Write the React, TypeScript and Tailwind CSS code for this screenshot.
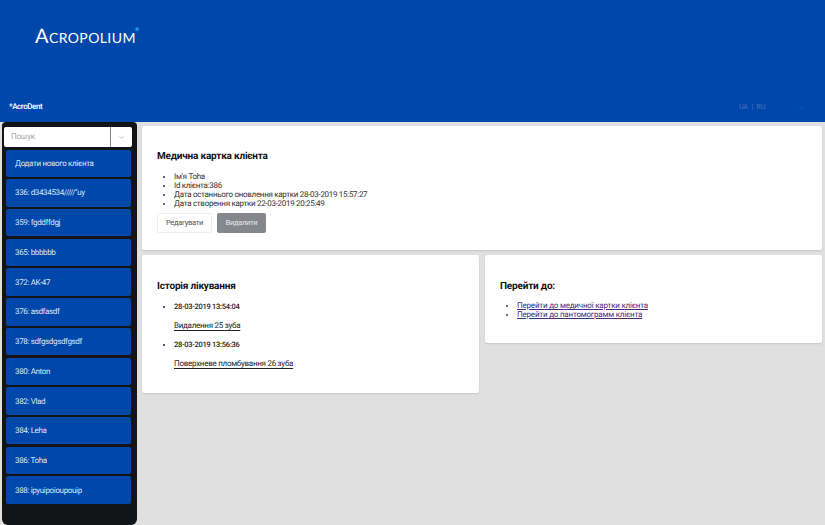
import React from "react";
import { ChevronDown } from "lucide-react";

const items = ["336: d3434534/////\"uy","359: fgddffdgj","365: bbbbbb","372: AK-47","376: asdfasdf","378: sdfgsdgsdfgsdf","380: Anton","382: Vlad","384: Leha","386: Toha","388: ipyuipoioupouip"];

export default function App() {
  return (
    <div className="font-['Roboto','Noto_Sans',sans-serif] antialiased [text-rendering:geometricPrecision] w-[825px] h-[525px] overflow-hidden bg-[#e0e0e0] flex flex-col">
      <header className="h-[122px] shrink-0 bg-[#0047ab] flex flex-col">
        <div className="h-[99px] pl-[35px] pt-[23px]">
          <div className="flex items-start text-white">
            <span className="font-['Lato',sans-serif] font-normal text-[20px] leading-[26px] tracking-[0.4px] [font-variant:small-caps]">Acropolium</span>
            <span className="text-[#29a3ef] text-[10px] leading-[12px] font-bold mt-[3px] -ml-[1px]">*</span>
          </div>
        </div>
        <div className="flex items-center h-[16px] pl-[9px] text-[8px] tracking-[-0.4px] font-medium text-white">
          <span>*AcroDent</span>
          <div className="ml-auto mr-[21px] flex text-[7px] tracking-normal text-[#4a76b8] font-normal">
            <span>UA&nbsp;&nbsp;|&nbsp;&nbsp;RU</span>
            <span className="ml-[33px]">...</span>
          </div>
        </div>
      </header>
      <div className="flex flex-1 min-h-0">
        <aside className="w-[135px] ml-[2px] bg-[#121416] rounded-b-[6px] rounded-t-[4px] flex flex-col px-[2px] pt-[5px]">
          <div className="flex h-[20px] text-[8px] tracking-[-0.2px] bg-white rounded-[2px] w-[128px]">
            <div className="w-[107px] pl-[7px] flex items-center text-[#a5a8ab] border-r border-[#888]">Пошук</div>
            <div className="flex-1 flex items-center justify-center"><ChevronDown size={7} className="text-[#999]" /></div>
          </div>
          <div className="flex flex-col gap-[2.23px] ml-[2px] w-[125px] mt-[2.5px]">
            {["Додати нового клієнта", ...items].map((t) => (
              <div key={t} className="h-[27.5px] shrink-0 bg-[#0047ab] rounded-[2px] pl-[9px] pt-[1px] flex items-center text-[8px] tracking-[-0.35px] text-[#dde6f4]">{t}</div>
            ))}
          </div>
        </aside>
        <main className="flex-1 pl-[5px] pr-[3px] pt-[4px] flex flex-col gap-[5px] text-[#222]">
          <section className="h-[124px] bg-white rounded-[2px] shadow-[0_1px_2px_rgba(0,0,0,0.12)] px-[15px] pt-[24px]">
            <h2 className="text-[10px] leading-[13px] font-bold tracking-[-0.2px] text-[#111]">Медична картка клієнта</h2>
            <ul className="list-disc pl-[17px] mt-[9px] text-[8px] leading-[9px] tracking-[-0.3px] text-[#333]">
              <li>Ім'я Toha</li>
              <li>Id клієнта:386</li>
              <li>Дата останнього оновлення картки 28-03-2019 15:57:27</li>
              <li>Дата створення картки 22-03-2019 20:25:49</li>
            </ul>
            <div className="flex gap-[5px] mt-[5px] text-[7.5px] tracking-[-0.3px]">
              <button className="w-[55px] h-[20px] bg-white border border-[#eee] rounded-[2px] text-[#555]">Редагувати</button>
              <button className="w-[49px] h-[20px] bg-[#85878c] rounded-[2px] text-[#e6e6e6]">Видалити</button>
            </div>
          </section>
          <div className="flex gap-[6px] items-start">
            <section className="w-[337px] h-[138px] bg-white rounded-[2px] shadow-[0_1px_2px_rgba(0,0,0,0.12)] px-[15px] pt-[25px]">
              <h2 className="text-[10px] leading-[13px] font-bold tracking-[-0.2px] text-[#111]">Історія лікування</h2>
              <ul className="list-disc pl-[17px] mt-[9px] text-[7.5px] leading-[10px] tracking-[-0.27px] font-medium">
                <li>28-03-2019 13:54:04</li>
                <p className="mt-[9px] font-normal text-[8px] tracking-[-0.27px] underline underline-offset-2">Видалення 25 зуба</p>
                <li className="mt-[9px]">28-03-2019 13:56:36</li>
                <p className="mt-[9px] font-normal text-[8px] tracking-[-0.27px] underline underline-offset-2">Поверхневе пломбування 26 зуба</p>
              </ul>
            </section>
            <section className="flex-1 h-[88px] bg-white rounded-[2px] shadow-[0_1px_2px_rgba(0,0,0,0.12)] px-[15px] pt-[25px]">
              <h2 className="text-[10px] leading-[13px] font-bold tracking-[-0.2px] text-[#111]">Перейти до:</h2>
              <ul className="list-disc pl-[17px] mt-[8px] text-[8px] leading-[9px] tracking-[-0.2px] text-[#4b2a80]">
                <li className="underline">Перейти до медичної картки клієнта</li>
                <li className="underline">Перейти до пантомограмм клієнта</li>
              </ul>
            </section>
          </div>
        </main>
      </div>
    </div>
  );
}
